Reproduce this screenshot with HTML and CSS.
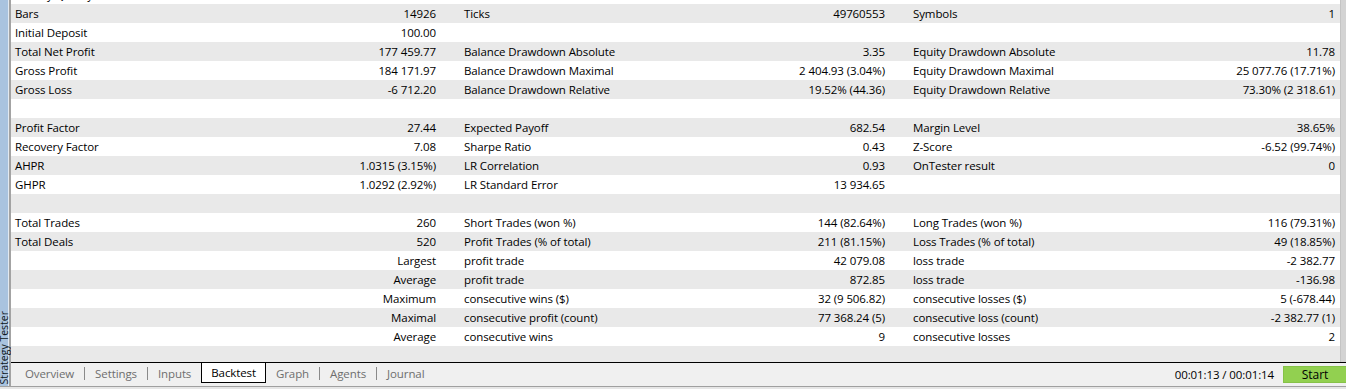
FILE: index.html
```html
<!DOCTYPE html>
<html lang="en">
<head>
    <meta charset="UTF-8">
    <title>Strategy Tester - Backtest</title>
    <link rel="stylesheet" href="styles.css">
</head>
<body>
    <div class="tester">
        <div class="workspace">
            <!-- docked panel caption -->
            <div class="side-caption"><span>Strategy Tester</span></div>

            <div class="panel">
                <!-- backtest results -->
                <div class="report">
                    <div class="report-view">
                        <div class="rows">
                            <div class="row"><div class="stat"><span>History Quality</span><span>100%</span></div><div class="stat"></div><div class="stat"></div></div>
                            <div class="row"><div class="stat"><span>Bars</span><span>14926</span></div><div class="stat"><span>Ticks</span><span>49760553</span></div><div class="stat"><span>Symbols</span><span>1</span></div></div>
                            <div class="row"><div class="stat"><span>Initial Deposit</span><span>100.00</span></div><div class="stat"></div><div class="stat"></div></div>
                            <div class="row"><div class="stat"><span>Total Net Profit</span><span>177 459.77</span></div><div class="stat"><span>Balance Drawdown Absolute</span><span>3.35</span></div><div class="stat"><span>Equity Drawdown Absolute</span><span>11.78</span></div></div>
                            <div class="row"><div class="stat"><span>Gross Profit</span><span>184 171.97</span></div><div class="stat"><span>Balance Drawdown Maximal</span><span>2 404.93 (3.04%)</span></div><div class="stat"><span>Equity Drawdown Maximal</span><span>25 077.76 (17.71%)</span></div></div>
                            <div class="row"><div class="stat"><span>Gross Loss</span><span>-6 712.20</span></div><div class="stat"><span>Balance Drawdown Relative</span><span>19.52% (44.36)</span></div><div class="stat"><span>Equity Drawdown Relative</span><span>73.30% (2 318.61)</span></div></div>
                            <div class="row"></div>
                            <div class="row"><div class="stat"><span>Profit Factor</span><span>27.44</span></div><div class="stat"><span>Expected Payoff</span><span>682.54</span></div><div class="stat"><span>Margin Level</span><span>38.65%</span></div></div>
                            <div class="row"><div class="stat"><span>Recovery Factor</span><span>7.08</span></div><div class="stat"><span>Sharpe Ratio</span><span>0.43</span></div><div class="stat"><span>Z-Score</span><span>-6.52 (99.74%)</span></div></div>
                            <div class="row"><div class="stat"><span>AHPR</span><span>1.0315 (3.15%)</span></div><div class="stat"><span>LR Correlation</span><span>0.93</span></div><div class="stat"><span>OnTester result</span><span>0</span></div></div>
                            <div class="row"><div class="stat"><span>GHPR</span><span>1.0292 (2.92%)</span></div><div class="stat"><span>LR Standard Error</span><span>13 934.65</span></div><div class="stat"></div></div>
                            <div class="row"></div>
                            <div class="row"><div class="stat"><span>Total Trades</span><span>260</span></div><div class="stat"><span>Short Trades (won %)</span><span>144 (82.64%)</span></div><div class="stat"><span>Long Trades (won %)</span><span>116 (79.31%)</span></div></div>
                            <div class="row"><div class="stat"><span>Total Deals</span><span>520</span></div><div class="stat"><span>Profit Trades (% of total)</span><span>211 (81.15%)</span></div><div class="stat"><span>Loss Trades (% of total)</span><span>49 (18.85%)</span></div></div>
                            <div class="row"><div class="stat"><span></span><span>Largest</span></div><div class="stat"><span>profit trade</span><span>42 079.08</span></div><div class="stat"><span>loss trade</span><span>-2 382.77</span></div></div>
                            <div class="row"><div class="stat"><span></span><span>Average</span></div><div class="stat"><span>profit trade</span><span>872.85</span></div><div class="stat"><span>loss trade</span><span>-136.98</span></div></div>
                            <div class="row"><div class="stat"><span></span><span>Maximum</span></div><div class="stat"><span>consecutive wins ($)</span><span>32 (9 506.82)</span></div><div class="stat"><span>consecutive losses ($)</span><span>5 (-678.44)</span></div></div>
                            <div class="row"><div class="stat"><span></span><span>Maximal</span></div><div class="stat"><span>consecutive profit (count)</span><span>77 368.24 (5)</span></div><div class="stat"><span>consecutive loss (count)</span><span>-2 382.77 (1)</span></div></div>
                            <div class="row"><div class="stat"><span></span><span>Average</span></div><div class="stat"><span>consecutive wins</span><span>9</span></div><div class="stat"><span>consecutive losses</span><span>2</span></div></div>
                            <div class="row"></div>
                        </div>
                    </div>
                    <div class="scrollbar"></div>
                </div>

                <!-- tab strip -->
                <div class="tabbar">
                    <div class="tabs">
                        <span class="tab">Overview</span>
                        <span class="sep"></span>
                        <span class="tab">Settings</span>
                        <span class="sep"></span>
                        <span class="tab">Inputs</span>
                        <span class="tab active">Backtest</span>
                        <span class="tab">Graph</span>
                        <span class="sep"></span>
                        <span class="tab">Agents</span>
                        <span class="sep"></span>
                        <span class="tab">Journal</span>
                    </div>
                    <div class="timer">00:01:13 / 00:01:14</div>
                    <button class="start-btn">Start</button>
                </div>
            </div>
        </div>
        <div class="bottom-edge"></div>
    </div>
</body>
</html>
```

FILE: styles.css
```css
body {
    margin: 0;
    padding: 0;
    font-family: "Open Sans", "Noto Sans", sans-serif;
    font-size: 11.5px;
    letter-spacing: -0.1px;
    color: #000;
    background-color: #f0f0f0;
    overflow: hidden;
}

.tester {
    width: 1346px;
    height: 389px;
    display: flex;
    flex-direction: column;
}

.workspace {
    display: flex;
    height: 386px;
}

/* vertical caption on the left */
.side-caption {
    width: 8px;
    background-color: #a9c3df;
    border-right: 1px solid #e2e9f1;
    display: flex;
    flex-direction: column;
    justify-content: flex-end;
    overflow: visible;
}

.side-caption span {
    writing-mode: vertical-rl;
    transform: rotate(180deg);
    font-size: 10.5px;
    letter-spacing: 0;
    line-height: 8px;
    color: #0e1620;
    white-space: nowrap;
    padding-top: 1px;
}

.panel {
    flex: 1;
    display: flex;
    flex-direction: column;
    border-left: 2px solid #a3a3a3;
    min-width: 0;
}

/* results list */
.report {
    height: 362px;
    display: flex;
    background-color: #fff;
}

.report-view {
    flex: 1;
    overflow: hidden;
}

.rows {
    margin-top: -15px; /* list is scrolled a little */
}

.row {
    height: 19px;
    line-height: 19px;
    display: grid;
    grid-template-columns: 449px 449px 1fr;
    white-space: nowrap;
}

.row:nth-child(even) {
    background-color: #e9e9e9;
}

.stat {
    display: flex;
    justify-content: space-between;
    padding: 0 24px 0 4px;
}

.stat:last-child {
    padding-right: 5px;
}

.scrollbar {
    width: 5px;
    background-color: #d3d3d3;
    border-left: 1px solid #c4c4c4;
}

/* bottom tab strip */
.tabbar {
    height: 23px;
    border-top: 1px solid #000;
    display: flex;
    align-items: flex-start;
    background-color: #f0f0f0;
}

.tabs {
    display: flex;
    align-items: center;
    padding-left: 4px;
    height: 20px;
}

.tab {
    padding: 0 10px;
    color: #6e6e6e;
    line-height: 19px;
}

.tab.active {
    color: #000;
    background-color: #fff;
    border: 1px solid #000;
    border-top: none;
    padding: 0 9px;
}

.sep {
    width: 1px;
    height: 13px;
    background-color: #8a8a8a;
}

.timer {
    margin-left: auto;
    margin-right: 9px;
    margin-top: 2px;
    line-height: 19px;
    color: #000;
}

.start-btn {
    margin-top: 3px;
    width: 63px;
    height: 17px;
    padding: 0;
    font-family: inherit;
    font-size: 12px;
    line-height: 15px;
    color: #000;
    background-color: #92d050;
    border: 1px solid #86c248;
    border-right: none;
}

.bottom-edge {
    height: 2px;
    border-top: 1px solid #a0a0a0;
    background-color: #e6e6e6;
}
```
